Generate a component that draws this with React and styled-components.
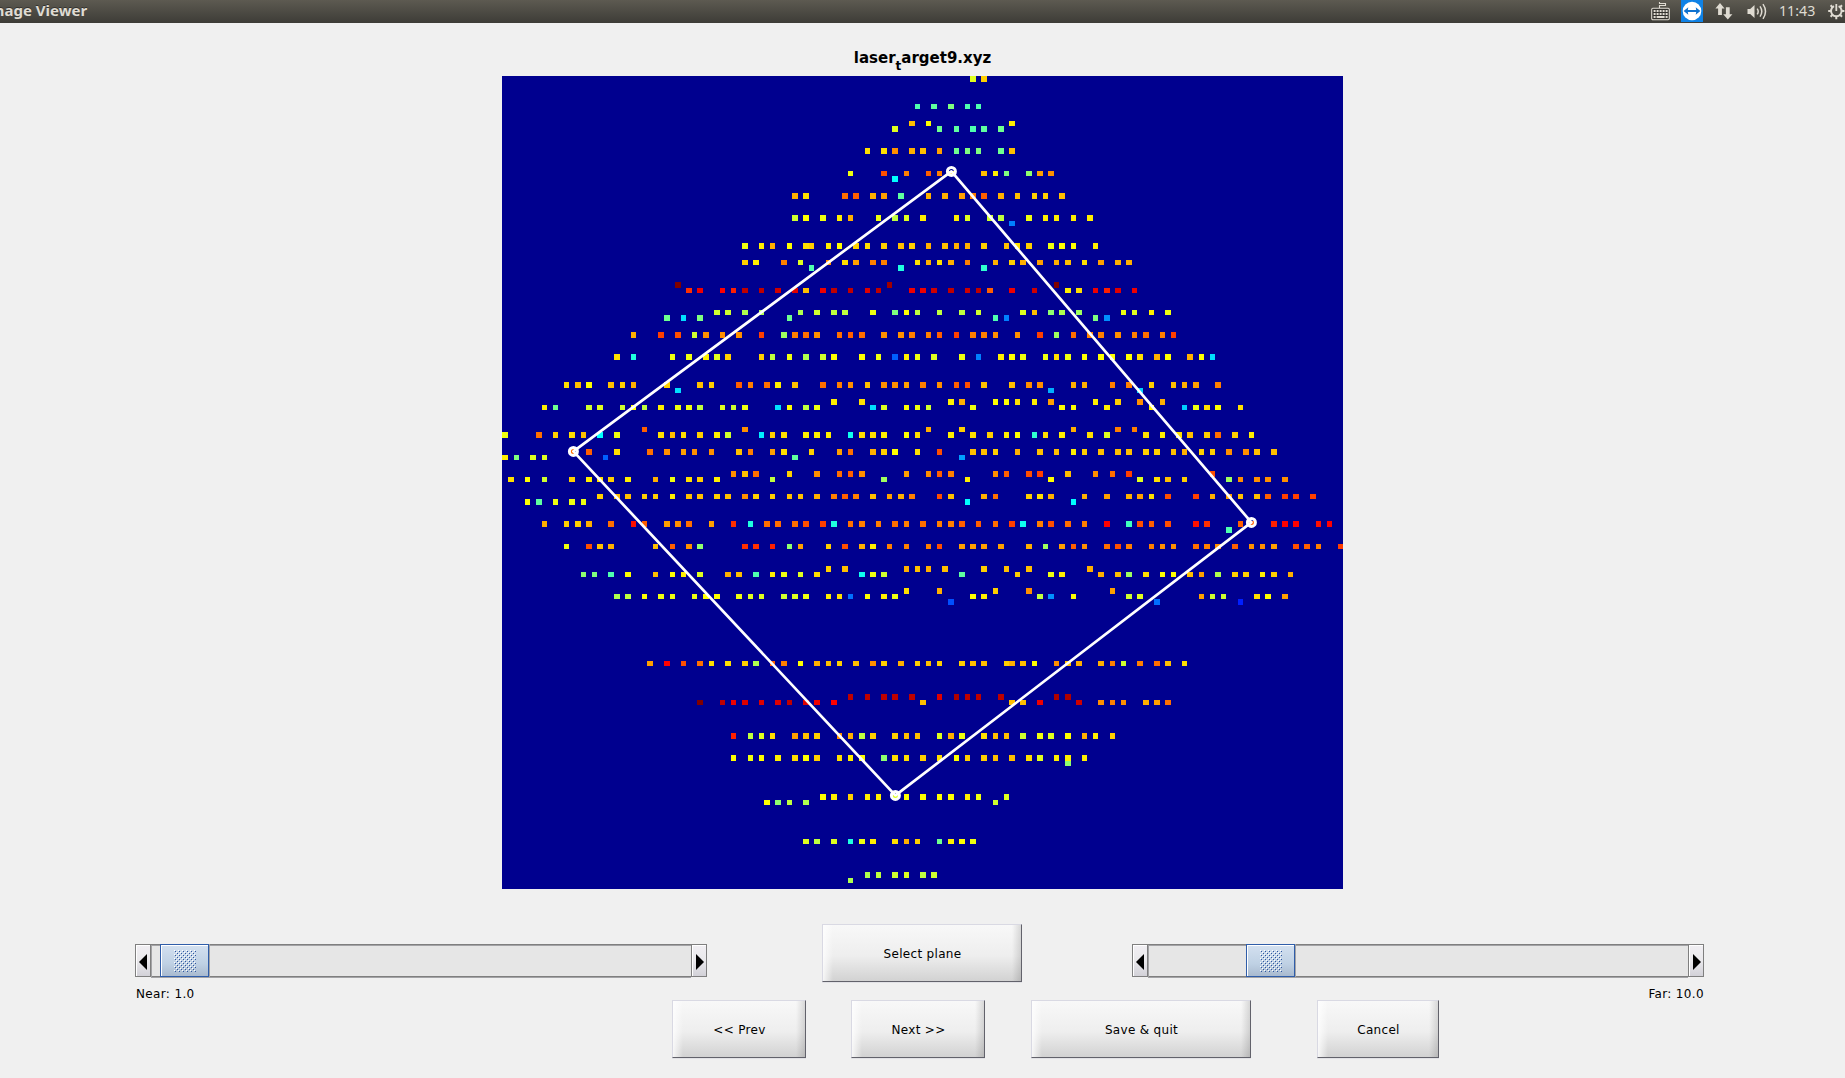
import React from "react";
import styled, { createGlobalStyle } from "styled-components";

const GlobalStyle = createGlobalStyle`
  * { box-sizing: border-box; }
  html, body { margin: 0; padding: 0; background: #f0f0f0; overflow: hidden; }
`;

const uiFont = `"DejaVu Sans", sans-serif`;

const Window = styled.div`
  width: 1845px;
  height: 1078px;
  display: flex;
  flex-direction: column;
  background: #f0f0f0;
  overflow: hidden;
  font-family: ${uiFont};
  color: #000;
`;

const TopBar = styled.header`
  flex: none;
  height: 23px;
  display: flex;
  justify-content: space-between;
  overflow: hidden;
  background: linear-gradient(#5d5a51, #3d3c37);
`;

const WindowTitle = styled.div`
  margin-left: -16px;
  font: bold 15px/20px "Noto Sans", "Open Sans", sans-serif;
  color: #dfdbd2;
  white-space: nowrap;
  text-shadow: 0 -1px 0 #33322e;
`;

const Tray = styled.div`
  width: 194px;
  flex: none;
  display: flex;
  align-items: flex-start;
  overflow: hidden;
`;

const TrayIcon = styled.svg`
  flex: none;
  display: block;
  margin-right: ${(p) => p.$after}px;
`;

const Clock = styled.div`
  flex: none;
  width: 49px;
  font: 14.2px/21px "Noto Sans", "Open Sans", sans-serif;
  color: #dfdbd2;
  white-space: nowrap;
`;

const Figure = styled.main`
  flex: 1;
  display: flex;
  flex-direction: column;
`;

const PlotTitle = styled.h1`
  height: 53px;
  margin: 0;
  padding-top: 25px;
  font: bold 15px/20px ${uiFont};
  text-align: center;
`;

const Subscript = styled.span`
  position: relative;
  top: 7px;
  font-size: 12px;
  line-height: 0;
`;

const Plot = styled.svg`
  display: block;
  width: 841px;
  height: 813px;
  margin-left: 502px;
  background: #00008f;
`;

const SliderRow = styled.div`
  height: 76px;
  margin-top: 35px;
  padding-left: 135px;
  display: flex;
  align-items: flex-start;
`;

const ButtonRow = styled.div`
  padding-left: 672px;
  display: flex;
`;

const SliderBox = styled.div`
  width: 572px;
  margin-top: 20px;
  display: flex;
  flex-direction: column;
`;

const SliderBar = styled.div`
  height: 33px;
  display: flex;
`;

const ArrowButton = styled.div`
  width: 16px;
  height: 33px;
  flex: none;
  display: flex;
  align-items: center;
  justify-content: center;
  padding-top: 3px;
  padding-left: ${(p) => p.$inset || 0}px;
  border: 1px solid #7f7f7f;
  box-shadow: inset 1px 1px 0 #fff;
  background: linear-gradient(#f1eff3, #eae9ec 50%, #d2d1d8);
`;

const Track = styled.div`
  flex: 1;
  height: 34px;
  display: flex;
  padding-left: ${(p) => p.$offset}px;
  border-top: 1px solid #7f7f7f;
  border-bottom: 1px solid #a3a3a6;
  box-shadow: inset 0 1px 0 #a3a3a6, inset 1px 0 0 #a3a3a6, inset 0 -1px 0 #7f7f7f;
  background: #e6e6e6;
`;

const Thumb = styled.div`
  width: 49px;
  height: 33px;
  margin-top: -1px;
  display: flex;
  align-items: center;
  justify-content: center;
  padding-top: 1px;
  padding-left: 1px;
  border: 1px solid #2f5da9;
  box-shadow: inset 1px 1px 0 #fff, 1px 0 0 #a3a3a6;
  background: linear-gradient(#d3e0f0, #bfd1e4 60%, #a9bacf);
`;

const SliderLabel = styled.div`
  margin-top: 8px;
  padding: 0 0 0 1px;
  font-size: 12px;
  line-height: 18px;
  letter-spacing: 0.35px;
  text-align: ${(p) => p.$align};
`;

const Button = styled.button`
  width: ${(p) => p.$width}px;
  height: 58px;
  flex: none;
  margin: 0 ${(p) => p.$after || 0}px 0 ${(p) => p.$before || 0}px;
  padding: 1px 0 0 1px;
  border: 1px solid;
  border-color: #d9d9e3 #62626b #62626b #d9d9e3;
  background:
    linear-gradient(90deg, rgba(255, 255, 255, 0.8), rgba(255, 255, 255, 0) 10px),
    linear-gradient(270deg, rgba(0, 0, 0, 0.13), rgba(0, 0, 0, 0) 9px),
    linear-gradient(#f8f8f8, #eeeeee 55%, #d2d2d2);
  box-shadow: 0 1px 0 #e2e2e6;
  font: 12px/16px ${uiFont};
  letter-spacing: 0.32px;
  color: #000;
`;

/* Depth samples: grid row -> "column:level" pairs, level indexes the 64-step jet map. */
const samples = {
  0: "84:37 86:42",
  5: "74:28 77:29 80:31 83:28 85:28",
  8: "73:43 76:39 91:40",
  9: "70:37 78:30 81:29 84:28 86:29 89:30",
  13: "65:41 68:41 70:46 73:44 75:43 78:45 81:30 83:31 85:31 89:30 91:43",
  17: "62:38 68:50 72:47 76:49 78:47 80:40 86:43 88:40 90:31 94:32 96:45 98:46",
  18: "70:23",
  21: "52:44 54:41 61:48 63:49 66:44 68:45 71:29 76:44 79:44 82:45 84:47 86:49 89:44 92:43 95:42 97:42 100:43",
  25: "52:36 54:39 57:38 60:40 62:44 67:38 70:35 72:37 75:40 81:40 83:37 87:36 89:35 94:38 97:40 99:40 102:40 105:40",
  26: "91:15",
  30: "43:38 46:40 48:44 51:39 54:41 55:42 58:40 60:39 63:42 65:41 68:42 71:43 73:42 76:44 79:43 81:44 83:44 86:42 90:43 92:41 94:42 98:38 100:39 102:39 106:40",
  33: "43:42 45:40 50:47 53:37 58:46 61:41 63:45 66:47 68:47 74:41 76:44 78:41 80:44 83:47 88:44 91:42 93:44 96:45 99:44 101:43 104:41 107:45 110:44 112:44",
  34: "55:28 71:25 86:26",
  37: "31:63 69:61 99:63",
  38: "33:52 35:56 39:55 41:53 43:59 46:59 49:58 52:57 54:43 57:56 59:59 62:59 65:57 67:59 73:56 75:56 77:58 80:59 83:58 85:59 87:49 91:56 95:58 101:40 103:41 106:56 108:53 110:57 113:56",
  42: "38:36 40:36 43:34 46:34 53:34 56:36 59:35 61:35 66:38 70:31 72:39 74:35 78:35 82:35 85:36 93:37 95:43 98:32 100:34 103:33 111:38 113:37 116:40 119:38",
  43: "29:30 32:21 35:31 51:30 88:28 90:15 106:31 108:16",
  46: "23:44 28:51 31:50 34:36 36:46 39:46 42:46 46:51 50:33 52:47 54:48 56:46 60:48 62:49 64:48 68:46 71:46 73:47 76:47 78:49 81:51 84:47 86:47 88:46 92:46 96:51 99:33 102:48 105:47 107:47 110:46 113:47 115:48 118:47 120:51",
  50: "20:41 23:25 30:38 33:38 36:40 38:37 40:42 46:42 48:35 51:38 54:34 57:36 59:39 64:39 67:38 70:13 72:40 74:38 77:37 82:38 85:15 89:40 91:39 93:38 97:38 99:41 101:38 104:39 107:39 109:39 112:39 114:41 117:44 119:39 123:44 125:39 127:21",
  55: "11:41 13:43 15:39 19:43 21:42 23:44 29:42 35:43 37:42 42:49 44:47 47:48 49:40 52:43 57:48 60:47 62:46 65:43 68:46 70:46 72:45 75:47 78:46 81:49 83:50 86:43 91:43 94:46 96:46 102:44 104:44 109:47 112:47 116:42 120:43 122:44 124:45 128:47",
  56: "31:21 98:18 114:20",
  58: "59:40 64:41 80:40 82:44 88:39 90:39 92:41 95:40 98:45 106:40 110:42 114:46 118:44",
  59: "7:40 9:30 15:36 17:37 21:36 23:39 25:35 28:40 31:38 33:38 35:35 39:37 41:36 43:38 49:21 51:39 54:35 56:38 66:21 68:37 72:39 74:38 76:36 84:38 100:39 102:39 108:40 116:40 122:20 124:38 126:41 128:39 132:41",
  63: "25:49 43:46 76:44 82:42 102:44 110:47 113:47",
  64: "0:38 6:48 9:42 12:41 14:43 17:23 20:38 28:41 30:43 32:41 35:42 38:40 40:36 46:22 48:42 50:41 54:40 56:40 58:40 62:24 64:41 66:41 68:40 72:39 74:41 80:40 84:41 87:42 90:40 92:39 95:26 97:41 100:40 105:41 108:37 115:41 118:40 121:41 123:43 126:42 128:48 131:42 134:40",
  67: "12:48 15:49 20:41 26:48 29:46 32:45 34:46 37:46 42:43 44:47 48:45 50:41 55:42 60:45 62:48 66:44 68:42 70:39 74:41 78:50 84:43 86:43 88:42 92:44 96:43 99:43 102:40 104:42 107:43 110:43 112:43 115:42 117:42 120:43 122:44 125:42 127:42 130:46 133:46 135:43 138:43",
  68: "0:40 2:31 5:37 7:37 18:13 52:29 82:17",
  71: "41:46 43:43 45:48 51:42 56:46 60:48 62:49 64:46 72:45 76:46 78:49 80:47 88:46 90:49 94:50 96:51 101:43 106:46 109:48 112:51 127:50",
  72: "1:41 4:39 7:36 12:42 15:40 17:41 19:42 22:40 27:44 30:38 33:41 35:42 38:40 48:35 68:33 83:40 98:39 114:37 117:41 119:43 122:42 130:33 132:46 135:46 137:46 140:46",
  75: "17:42 20:43 22:43 25:42 27:42 30:40 33:43 35:43 38:42 40:43 43:46 45:42 48:42 51:43 53:43 56:44 59:47 61:49 63:47 66:43 69:45 71:44 73:47 78:50 80:43 86:44 88:48 94:42 96:41 98:44 104:44 108:45 112:44 114:45 116:41 119:50 124:51 127:44 130:45 132:43 135:43 137:49 140:51 142:51 145:51",
  76: "4:39 6:29 9:38 12:38 14:38 83:23 102:23",
  80: "7:44 11:42 13:42 15:44 19:48 23:54 25:49 29:45 31:46 33:48 37:45 41:52 44:25 47:48 49:48 52:48 54:50 57:51 59:25 62:48 64:47 67:47 70:48 72:47 75:48 78:47 80:47 82:49 85:49 88:48 91:51 93:24 96:47 98:50 101:48 104:47 108:55 112:27 114:50 116:49 119:50 124:54 126:52 132:49 134:49 138:53 140:55 142:55 146:54 148:55",
  81: "130:28",
  84: "11:38 15:50 17:43 19:44 27:43 30:49 33:46 35:32 43:52 45:52 48:53 51:32 53:45 58:42 61:50 64:44 66:40 69:47 72:47 76:47 78:50 82:45 84:45 86:45 89:45 94:44 97:33 100:45 102:49 104:46 108:48 110:50 112:47 116:47 118:46 120:46 124:48 126:47 128:46 131:49 134:46 136:46 138:45 142:50 144:49 146:47 150:51",
  88: "58:42 61:43 72:44 74:43 76:44 79:43 86:42 90:43 94:43 105:44",
  89: "14:32 16:31 19:28 22:39 27:43 30:39 32:40 35:37 40:44 42:43 45:28 48:40 50:38 53:37 56:41 64:24 66:38 68:36 82:29 92:42 98:38 100:40 107:44 110:43 112:33 115:41 118:39 120:39 123:43 125:45 128:34 131:42 133:42 136:40 138:42 141:44",
  92: "72:41 78:44 88:42 94:46 109:45",
  93: "20:34 22:35 25:39 28:38 30:38 34:38 36:39 38:39 42:38 44:37 46:37 50:36 52:37 54:38 58:40 60:41 62:14 65:39 68:40 70:38 84:39 86:40 96:35 98:16 102:39 112:36 114:37 125:45 127:36 129:36 135:41 137:39 140:45",
  94: "80:12 117:14 132:9",
  105: "26:45 29:55 32:50 35:48 37:41 40:41 43:42 45:34 48:49 50:47 53:39 56:44 58:43 60:42 63:43 66:46 68:42 71:44 74:42 76:43 78:42 82:42 84:43 86:43 90:42 91:44 93:43 95:39 99:46 101:43 103:44 107:44 109:47 111:36 114:47 117:48 119:43 122:41",
  111: "62:59 65:59 68:59 70:59 73:59 78:57 81:60 83:59 85:59 89:59 99:60 101:60",
  112: "35:63 39:59 41:56 43:57 46:57 49:57 51:59 54:57 56:56 59:55 75:43 91:43 93:43 96:56 103:58 107:46 109:47 111:46 115:44 117:45 119:48",
  118: "41:53 44:35 46:37 48:41 52:45 54:43 56:42 60:46 62:44 64:35 66:42 70:42 72:43 74:43 78:37 80:44 82:38 86:41 88:43 90:43 93:36 96:38 98:37 101:39 104:44 106:40 109:42",
  122: "41:39 44:38 46:39 49:40 52:41 54:39 56:42 60:41 62:40 64:39 68:32 70:41 72:41 75:42 78:41 81:39 83:42 86:42 88:43 91:43 94:41 96:37 99:40 101:40 104:40",
  123: "101:32",
  129: "57:39 59:40 62:42 65:40 67:40 70:37 72:39 75:39 78:39 80:39 83:40 85:38 90:37",
  130: "47:39 49:32 51:35 54:34 88:36",
  137: "54:37 56:35 59:37 62:25 64:38 66:40 70:41 72:44 74:42 78:30 80:40 82:39 84:38",
  143: "65:34 67:35 70:36 72:37 75:35 77:36",
  144: "62:34",
};

const clamp = (v) => Math.max(0, Math.min(1, v));

const jet = (i) => {
  const r = i < 56 ? (i - 23) / 16 : 1 - (i - 55) / 16;
  const g = i < 32 ? (i - 7) / 16 : 1 - (i - 39) / 16;
  const b = i < 8 ? (i + 9) / 16 : 1 - (i - 23) / 16;
  return `rgb(${[r, g, b].map((v) => Math.floor(clamp(v) * 255)).join(",")})`;
};

/* Cell boundaries snapped to whole pixels so every sample stays crisp. */
const colEdge = (c) => (c === 0 ? 0 : Math.ceil(c * 5.5685 + 0.07));
const rowEdge = (r) => Math.round(r * 5.5675 + 0.03);

const cells = Object.entries(samples).flatMap(([row, list]) =>
  list.split(" ").map((pair) => {
    const [col, level] = pair.split(":").map(Number);
    const r = Number(row);
    return {
      key: `${r}-${col}`,
      x: colEdge(col),
      y: rowEdge(r),
      width: colEdge(col + 1) - colEdge(col),
      height: rowEdge(r + 1) - rowEdge(r),
      fill: jet(level),
    };
  })
);

const corners = [
  [449.4, 95.4],
  [749.4, 446.4],
  [393.4, 719.4],
  [71.4, 375.4],
];

function DepthPlot() {
  return (
    <Plot viewBox="0 0 841 813">
      {cells.map(({ key, ...rect }) => (
        <rect key={key} {...rect} />
      ))}
      <polygon
        points={corners.map((p) => p.join(",")).join(" ")}
        fill="none"
        stroke="#fff"
        strokeWidth="2.7"
        strokeLinejoin="round"
      />
      {corners.map(([x, y]) => (
        <circle key={x} cx={x} cy={y} r="4" fill="none" stroke="#fff" strokeWidth="3" />
      ))}
    </Plot>
  );
}

function Arrow({ dir }) {
  return (
    <svg width="8" height="16" viewBox="0 0 8 16">
      <path d={dir === "left" ? "M8 0V16L0 8Z" : "M0 0V16L8 8Z"} fill="#000" />
    </svg>
  );
}

function Grip() {
  const dots = [];
  for (let y = 0; y < 11; y++) {
    for (let x = y % 2; x < 11; x += 2) {
      dots.push(<rect key={`w${x}-${y}`} x={x * 2} y={y * 2} width="1" height="1" fill="#fff" />);
      dots.push(
        <rect key={`b${x}-${y}`} x={x * 2 + 1} y={y * 2 + 1} width="1" height="1" fill="#2f56a0" />
      );
    }
  }
  return (
    <svg width="22" height="22" viewBox="0 0 22 22" shapeRendering="crispEdges">
      {dots}
    </svg>
  );
}

function Slider({ offset, label, align }) {
  return (
    <SliderBox>
      <SliderBar>
        <ArrowButton>
          <Arrow dir="left" />
        </ArrowButton>
        <Track $offset={offset}>
          <Thumb>
            <Grip />
          </Thumb>
        </Track>
        <ArrowButton $inset={2}>
          <Arrow dir="right" />
        </ArrowButton>
      </SliderBar>
      <SliderLabel $align={align}>{label}</SliderLabel>
    </SliderBox>
  );
}

const ink = "#dfdbd2";

export default function App() {
  return (
    <Window>
      <GlobalStyle />
      <TopBar>
        <WindowTitle>Image Viewer</WindowTitle>
        <Tray>
          <TrayIcon $after={11} width="19" height="23" viewBox="0 0 19 23">
            <path d="M8.5 8V5.5H14.5V3.5H8.5V2" fill="none" stroke={ink} strokeWidth="1.1" />
            <rect x="0.7" y="8.2" width="17.6" height="11.6" rx="1.2" fill="#34332f" stroke={ink} strokeWidth="1.1" />
            {[0, 1, 2, 3, 4].map((i) => (
              <g key={i} fill={ink}>
                <rect x={2.6 + i * 3} y="10" width="2" height="2" />
                <rect x={2.6 + i * 3} y="13" width="2" height="2" />
              </g>
            ))}
            <rect x="2.6" y="16" width="2" height="2" fill={ink} />
            <rect x="5.6" y="16" width="8" height="2" fill={ink} />
            <rect x="14.6" y="16" width="2" height="2" fill={ink} />
          </TrayIcon>
          <TrayIcon $after={12} width="22" height="22" viewBox="0 0 22 22">
            <rect width="22" height="22" fill="#0f82e6" />
            <circle cx="11" cy="11" r="9.3" fill="#fff" />
            <path d="M2.6 11L7.3 7.3L6.8 10H15.2L14.7 7.3L19.4 11L14.7 14.7L15.2 12H6.8L7.3 14.7Z" fill="#0f72cf" />
          </TrayIcon>
          <TrayIcon $after={14} width="18" height="23" viewBox="0 0 18 23">
            <path d="M5 3L9.6 8.4H6.9V15H3.1V8.4H0.4Z" fill={ink} />
            <path d="M12.8 19.6L8.2 14.2H10.9V7.2H14.7V14.2H17.4Z" fill={ink} />
          </TrayIcon>
          <TrayIcon $after={11} width="21" height="23" viewBox="0 0 21 23">
            <path d="M0.5 9H3.2L7.5 5V18L3.2 14H0.5Z" fill={ink} />
            <path d="M10.2 8.6Q12.2 11.5 10.2 14.4M13 6.4Q16.6 11.5 13 16.6M16 4.2Q21 11.5 16 18.8" fill="none" stroke={ink} strokeWidth="1.5" />
          </TrayIcon>
          <Clock>11:43</Clock>
          <TrayIcon $after={0} width="17" height="23" viewBox="0 0 17 23">
            <g stroke={ink} fill="none">
              <path d="M6 6.2A5.3 5.3 0 1 0 10.6 6.2" strokeWidth="2" />
              <path d="M8.3 4V11" strokeWidth="1.8" />
              <path d="M0.2 11H3M13.6 11H16.4M8.3 16.4V19.2M2.6 5.3L4.5 7.2M14 5.3L12.1 7.2M2.6 16.7L4.5 14.8M14 16.7L12.1 14.8" strokeWidth="2" />
            </g>
          </TrayIcon>
        </Tray>
      </TopBar>
      <Figure>
        <PlotTitle>
          laser<Subscript>t</Subscript>arget9.xyz
        </PlotTitle>
        <DepthPlot />
        <SliderRow>
          <Slider offset={9} label="Near: 1.0" align="left" />
          <Button $width={200} $before={115} $after={110}>
            Select plane
          </Button>
          <Slider offset={98} label="Far: 10.0" align="right" />
        </SliderRow>
        <ButtonRow>
          <Button $width={134} $after={45}>&lt;&lt; Prev</Button>
          <Button $width={134} $after={46}>Next &gt;&gt;</Button>
          <Button $width={220} $after={66}>Save &amp; quit</Button>
          <Button $width={122}>Cancel</Button>
        </ButtonRow>
      </Figure>
    </Window>
  );
}
